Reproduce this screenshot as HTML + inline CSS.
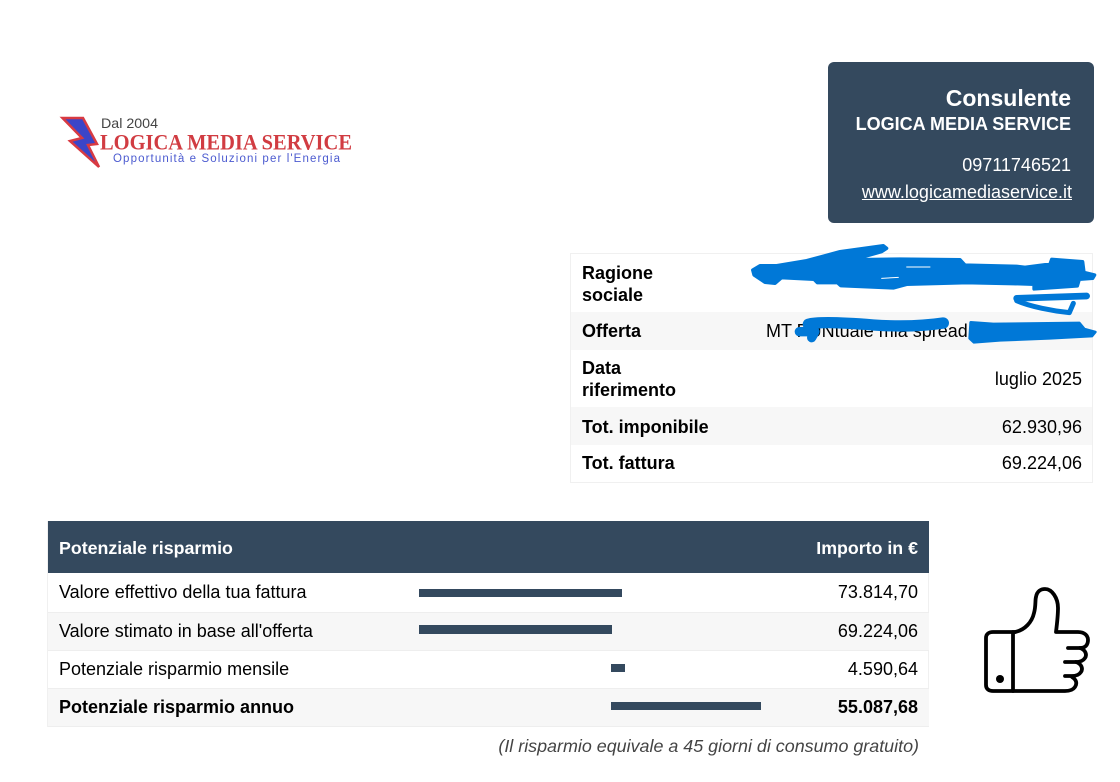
<!DOCTYPE html>
<html lang="it"><head><meta charset="utf-8"><title>Potenziale risparmio</title>
<style>
html,body{margin:0;padding:0;background:#fff}
body{width:1120px;height:782px;position:relative;overflow:hidden;font-family:"Liberation Sans",sans-serif;color:#000;font-size:18px}
.a{position:absolute;white-space:nowrap;line-height:22px}
.r{text-align:right}
.b{font-weight:bold}
.box{position:absolute}
</style></head><body>

<!-- Logo -->
<svg class="box" style="left:55px;top:110px" width="305" height="62" viewBox="0 0 305 62">
<path d="M7.500 8H28L42 34L33 35L44 57L15 31L27 28Z" fill="#3b45c8" stroke="#d83a42" stroke-width="2.500"/>
<text x="46" y="18" font-family="Liberation Sans,sans-serif" font-size="14" fill="#444" textLength="57" lengthAdjust="spacingAndGlyphs">Dal 2004</text>
<text x="45" y="39.500" font-family="Liberation Serif,serif" font-weight="bold" font-size="22.500" fill="#d13c42" textLength="252" lengthAdjust="spacingAndGlyphs">LOGICA MEDIA SERVICE</text>
<text x="58" y="52" font-family="Liberation Sans,sans-serif" font-size="11.500" fill="#4c5bd0" textLength="227" lengthAdjust="spacing">Opportunità e Soluzioni per l'Energia</text>
</svg>

<!-- Consulente -->
<div class="box" style="left:828px;top:62px;width:266px;height:161px;background:#34495e;border-radius:6px"></div>
<div class="a r b" style="right:49px;top:87px;color:#fff;font-size:23px">Consulente</div>
<div class="a r b" style="right:49px;top:113px;color:#fff;font-size:18px">LOGICA MEDIA SERVICE</div>
<div class="a r" style="right:49px;top:154px;color:#fff;font-size:18px">09711746521</div>
<div class="a r" style="right:48px;top:181px;color:#fff;font-size:18px;text-decoration:underline">www.logicamediaservice.it</div>

<!-- Info table -->
<div class="box" style="left:570px;top:253px;width:521px;height:228px;border:1px solid #f0f0f0"></div>
<div class="box" style="left:571px;top:312px;width:521px;height:38px;background:#f7f7f7"></div>
<div class="box" style="left:571px;top:407px;width:521px;height:38px;background:#f7f7f7"></div>

<div class="a b" style="left:582px;top:262px">Ragione<br>sociale</div>
<div class="a b" style="left:582px;top:320px">Offerta</div>
<div class="a" style="left:766px;top:320px">MT PUNtuale mia spread</div>
<div class="a b" style="left:582px;top:357px">Data<br>riferimento</div>
<div class="a r" style="right:38px;top:368px">luglio 2025</div>
<div class="a b" style="left:582px;top:416px">Tot. imponibile</div>
<div class="a r" style="right:38px;top:416px">62.930,96</div>
<div class="a b" style="left:582px;top:452px">Tot. fattura</div>
<div class="a r" style="right:38px;top:452px">69.224,06</div>

<!-- Blue scribbles -->
<svg class="box" style="left:740px;top:235px" width="370" height="115" viewBox="0 0 1110 345" fill="none" stroke="#0078d7" stroke-linecap="round" stroke-linejoin="round">
<path fill="#0078d7" stroke-width="10" d="M38 105L60 92L110 92L200 77L300 50L430 32L440 40L425 50L340 74L480 72L660 74L675 90L830 94L855 97L930 87L935 73L1028 80L1032 112L1064 120L1058 130L1018 133L1012 153L882 162L882 148L820 146L680 143L500 148L460 159L302 152L292 143L232 143L222 133L125 128L105 145L75 142L42 120Z"/>
<path stroke="#fff" stroke-width="3" d="M500 96H570M425 130L475 127"/>
<path stroke-width="20" d="M830 190L1040 183"/>
<path stroke-width="15" d="M830 197C870 215 940 228 988 233L1000 205"/>
<path stroke-width="34" d="M205 268C230 260 300 262 400 270C460 274 530 276 610 264"/>
<path stroke-width="28" d="M178 290H225L215 308"/>
<path fill="#0078d7" stroke-width="8" d="M692 262L760 267L1018 264L1033 282L1066 291L1056 303L930 310L780 316L702 322L689 310Z"/>
</svg>

<!-- Savings table -->
<div class="box" style="left:47px;top:521px;width:882px;height:206px;border-left:1px solid #f0f0f0;border-right:1px solid #f0f0f0;box-sizing:border-box"></div>
<div class="box" style="left:48px;top:521px;width:881px;height:52px;background:#34495e"></div>
<div class="box" style="left:48px;top:612px;width:881px;height:37px;background:#f7f7f7;border-top:1px solid #eeeeee;border-bottom:1px solid #eeeeee"></div>
<div class="box" style="left:48px;top:688px;width:881px;height:37px;background:#f7f7f7;border-top:1px solid #eeeeee;border-bottom:1px solid #eeeeee"></div>

<div class="a b" style="left:59px;top:537px;color:#fff;font-size:17.800px">Potenziale risparmio</div>
<div class="a r b" style="right:202px;top:537px;color:#fff;font-size:17.800px">Importo in €</div>

<div class="a" style="left:59px;top:581px">Valore effettivo della tua fattura</div>
<div class="box" style="left:419px;top:589px;width:203px;height:8px;background:#34495e"></div>
<div class="a r" style="right:202px;top:581px">73.814,70</div>

<div class="a" style="left:59px;top:620px">Valore stimato in base all'offerta</div>
<div class="box" style="left:419px;top:625px;width:193px;height:9px;background:#34495e"></div>
<div class="a r" style="right:202px;top:620px">69.224,06</div>

<div class="a" style="left:59px;top:658px">Potenziale risparmio mensile</div>
<div class="box" style="left:611px;top:664px;width:14px;height:8px;background:#34495e"></div>
<div class="a r" style="right:202px;top:658px">4.590,64</div>

<div class="a b" style="left:59px;top:696px">Potenziale risparmio annuo</div>
<div class="box" style="left:611px;top:702px;width:150px;height:8px;background:#34495e"></div>
<div class="a r b" style="right:202px;top:696px">55.087,68</div>

<div class="a r" style="right:201px;top:735px;font-style:italic;font-size:17.900px;color:#444">(Il risparmio equivale a 45 giorni di consumo gratuito)</div>

<!-- Thumbs up -->
<svg class="box" style="left:970px;top:580px" width="130" height="120" viewBox="0 0 130 120" fill="none" stroke="#000" stroke-width="3.800" stroke-linecap="round" stroke-linejoin="round">
<path d="M45 52C55 50 62 42 64 33C66 26 65 20 66 17C67 11 71 9 75 9C82 9 88 18 88 28C88 36 87 44 86 52H108C115 52 118 56 118 60C118 65 115 68 110 68H98"/>
<path d="M110 68C116 70 117 75 115 78C113 81 110 82 106 82H95"/>
<path d="M106 82C112 84 113 89 111 92C109 95 105 96 102 96H95"/>
<path d="M102 97C107 100 107 104 105 107C103 110 99 111 95 111H23C19 111 16 109 16 105V58C16 54 19 52 23 52H45"/>
<path d="M43 52V111"/>
<circle cx="30" cy="99" r="4" fill="#000" stroke="none"/>
</svg>
</body></html>
